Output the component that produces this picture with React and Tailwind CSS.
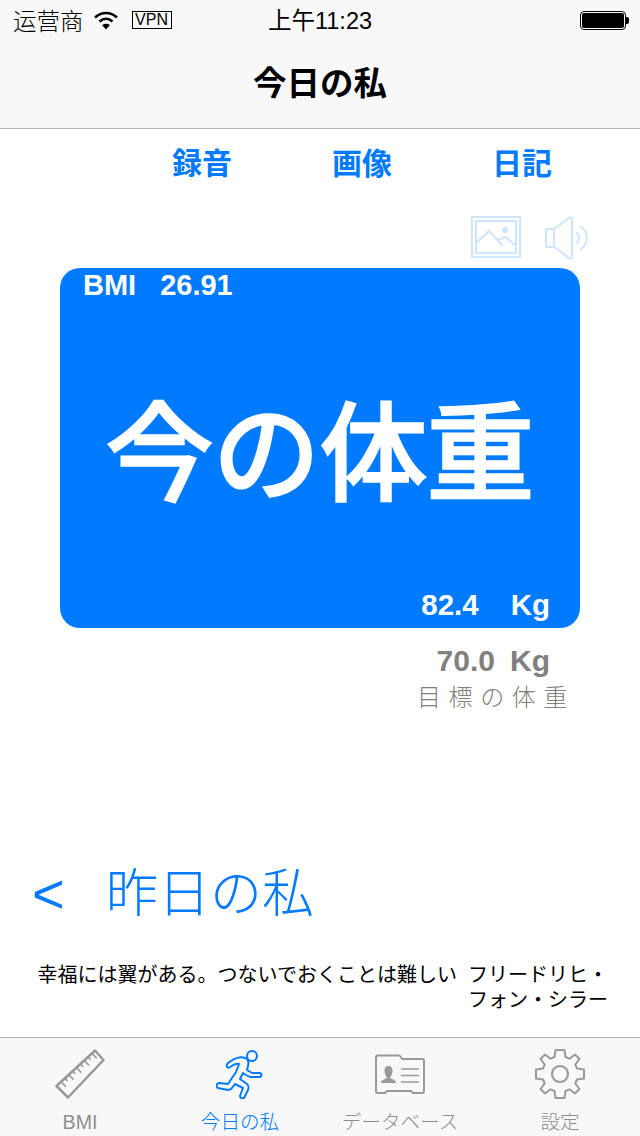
const JP = 'font-["Liberation_Sans","Noto_Sans_CJK_JP",sans-serif]'

function Wifi() {
  return (
    <svg width="26" height="20" viewBox="0 0 26 20" className="block">
      <path d="M2 7.500C8.500 1.500 17.500 1.500 24 7.500" fill="none" stroke="#000" strokeWidth="2.600" />
      <path d="M6.500 11.500C10.500 8 15.500 8 19.500 11.500" fill="none" stroke="#000" strokeWidth="2.600" />
      <path d="M13 19.500L9.200 15.200C11.400 13.400 14.600 13.400 16.800 15.200Z" fill="#000" />
    </svg>
  )
}

function Battery() {
  return (
    <div className="flex items-center">
      <div className="w-[46px] h-[19px] border border-black rounded-[4px] p-[1px] bg-white">
        <div className="w-full h-full bg-black rounded-[2px]" />
      </div>
      <div className="w-[3px] h-[7px] bg-black rounded-r-[2px]" />
    </div>
  )
}

function StatusBar() {
  return (
    <div className="relative h-[40px] flex items-center justify-between pl-[13px] pr-[11px]">
      <div className="flex items-center">
        <span className="text-[23.500px] leading-[42px] text-black font-light font-['Noto_Sans_CJK_SC',sans-serif]">运营商</span>
        <div className="ml-[9px]"><Wifi /></div>
        <span className="ml-[13px] border border-black h-[18px] w-[40px] flex items-center justify-center text-[16px] leading-none text-black font-['Liberation_Sans',sans-serif]">VPN</span>
      </div>
      <span className="absolute left-0 right-0 top-0 text-center text-[23.500px] leading-[42px] text-black font-['Liberation_Sans','Noto_Sans_CJK_SC',sans-serif]">上午11:23</span>
      <Battery />
    </div>
  )
}

function ImageIcon() {
  return (
    <svg width="50" height="42" viewBox="0 0 50 42" fill="none" stroke="#cfe4fd" strokeWidth="2">
      <rect x="1" y="1" width="48" height="40" />
      <rect x="5" y="5" width="40" height="32" />
      <path d="M5 27L18 15L32 30" />
      <path d="M26 24L35 21L45 30" />
      <circle cx="34" cy="14" r="3" fill="#cfe4fd" stroke="none" />
    </svg>
  )
}

function SpeakerIcon() {
  return (
    <svg width="44" height="44" viewBox="0 0 44 44" fill="none" stroke="#cfe4fd" strokeWidth="2">
      <path d="M2 13H9L25 1.500C26 1 27 1.500 27 3V41C27 42.500 26 43 25 42.500L9 31H2C1.500 31 1 30.500 1 30V14C1 13.500 1.500 13 2 13Z" strokeLinejoin="round" />
      <path d="M9 13V31" />
      <path d="M31 16C35 19 35 25 31 28" />
      <path d="M35 10C44 16 44 28 35 34" />
    </svg>
  )
}

function Ruler() {
  return (
    <svg width="50" height="50" viewBox="0 0 50 50" fill="none" stroke="#999" strokeWidth="2">
      <path d="M1.500 37L40 1.500L48.500 11L13 48.500Z" strokeLinejoin="round" strokeWidth="2.500" />
      <path d="M6.100 32.700L10.900 37.800M10 29.200L12.700 32.100M13.800 25.600L18.600 30.700M17.700 22.100L20.400 25M21.500 18.500L26.300 23.600M25.400 15L28.100 17.900M29.200 11.400L34 16.500M33 7.900L35.700 10.800M36.900 4.300L41.700 9.400" strokeWidth="1.600" />
    </svg>
  )
}

function Runner() {
  return (
    <svg width="48" height="50" viewBox="0 0 48 50" fill="none" stroke="#007aff" strokeWidth="2" strokeLinejoin="round" strokeLinecap="round">
      <circle cx="36" cy="7" r="5" />
      <path d="M12 14C18 9 25 7 29 9C32 10 33 13 32 17L31 21L36 24L44 24C46 25 46 27 44 28L35 28C33 28 30 26 27 24L24 30L31 35C33 37 33 38 32 41L28 49C26 50 24 49 24 47L27 39L19 35L16 39C15 40 14 41 12 41L2 39C0 38 0 35 3 34L12 35L20 23L23 15C20 14 17 16 14 18C12 20 9 17 12 14Z" />
    </svg>
  )
}

function IdCard() {
  return (
    <svg width="50" height="40" viewBox="0 0 50 40" fill="none" stroke="#999" strokeWidth="2">
      <path d="M3 1.500H24C25 1.500 25.500 2 26 3.500C26.500 4.500 27 5 28 5H47C48 5 49 6 49 7V37C49 38 48 39 47 39H38L36 37H12L10 39H3C2 39 1 38 1 37V3.500C1 2.500 2 1.500 3 1.500Z" strokeLinejoin="round" />
      <path d="M26 15H44M26 21.500H44M26 28H44" strokeWidth="1.600" />
      <path d="M6 29C6 26 10 25 12 24C11 22 9.500 20 9.500 16.500C9.500 13.500 11 12 13.500 12C16 12 17.500 13.500 17.500 16.500C17.500 20 16 22 15 24C17 25 21 26 21 29Z" fill="#999" stroke="none" />
    </svg>
  )
}

function Gear() {
  return (
    <svg width="50" height="50" viewBox="0 0 50 50" fill="none" stroke="#999" strokeWidth="2" strokeLinejoin="round">
      <path d="M20.500 1H29.500L30.500 8L34.500 9.700L40 5.500L44.500 10L40.300 15.500L42 19.500L49 20.500V29.500L42 30.500L40.300 34.500L44.500 40L40 44.500L34.500 40.300L30.500 42L29.500 49H20.500L19.500 42L15.500 40.300L10 44.500L5.500 40L9.700 34.500L8 30.500L1 29.500V20.500L8 19.500L9.700 15.500L5.500 10L10 5.500L15.500 9.700L19.500 8Z" />
      <circle cx="25" cy="25" r="8" strokeWidth="2.200" />
    </svg>
  )
}

function Tab({ icon, label, active }) {
  return (
    <div className="flex flex-col items-center w-[160px]">
      <div className="h-[52px] flex items-center justify-center">{icon}</div>
      <span className={`mt-[10px] text-[19.600px] leading-[24px] font-light whitespace-nowrap ${active ? 'text-[#007aff]' : 'text-[#8e8e8e]'}`}>{label}</span>
    </div>
  )
}

export default function App() {
  return (
    <div className={`w-[640px] h-[1136px] bg-white flex flex-col overflow-hidden ${JP}`}>
      <header className="h-[129px] bg-[#f8f8f8] border-b border-[#b2b2b2]">
        <StatusBar />
        <h1 className="h-[88px] flex items-center justify-center text-[33.500px] font-bold text-black">今日の私</h1>
      </header>

      <nav className="flex h-[68px] pt-[1px] items-center text-[30px] font-bold text-[#007aff]">
        <span className="ml-[172px]">録音</span>
        <span className="ml-[100px]">画像</span>
        <span className="ml-[100px]">日記</span>
      </nav>

      <div className="flex h-[71px] pt-[19px] pl-[471px] gap-[24px]">
        <ImageIcon />
        <SpeakerIcon />
      </div>

      <section className="mx-[60px] h-[360px] bg-[#007aff] rounded-[20px] flex flex-col text-white font-bold">
        <div className="flex pl-[23px] text-[29px] leading-[34px] gap-[24px]">
          <span>BMI</span>
          <span>26.91</span>
        </div>
        <div className="flex-1 flex items-center justify-center text-[107px] leading-none font-normal pt-[20px] [-webkit-text-stroke:3.500px_white]">今の体重</div>
        <div className="flex justify-end pr-[30px] pb-[6px] text-[29.500px] leading-[34px] gap-[32px]">
          <span>82.4</span>
          <span>Kg</span>
        </div>
      </section>

      <div className="pt-[15px] pr-[90px] flex justify-end gap-[15px] text-[30px] leading-[36px] font-bold text-[#808080]">
        <span>70.0</span>
        <span>Kg</span>
      </div>
      <div className="pt-[2px] pr-[65px] text-right text-[24px] leading-[34px] tracking-[7.600px] text-[#808080] font-light">目標の体重</div>

      <div className="mt-[148px] flex items-center h-[60px] pt-[1px] pl-[32px] text-[#007aff] text-[52px] leading-[60px] font-light">
        <span className="w-[74px] text-[56px]">&lt;</span>
        <span>昨日の私</span>
      </div>

      <p className="mt-[40px] mr-[32px] text-right text-[20px] leading-[25px] text-black">
        幸福には翼がある。つないでおくことは難しい&nbsp; フリードリヒ・<br />フォン・シラー
      </p>

      <footer className="mt-auto h-[99px] bg-[#f8f8f8] border-t border-[#b2b2b2] flex pt-[10px]">
        <Tab icon={<Ruler />} label="BMI" />
        <Tab icon={<Runner />} label="今日の私" active />
        <Tab icon={<IdCard />} label="データベース" />
        <Tab icon={<Gear />} label="設定" />
      </footer>
    </div>
  )
}
